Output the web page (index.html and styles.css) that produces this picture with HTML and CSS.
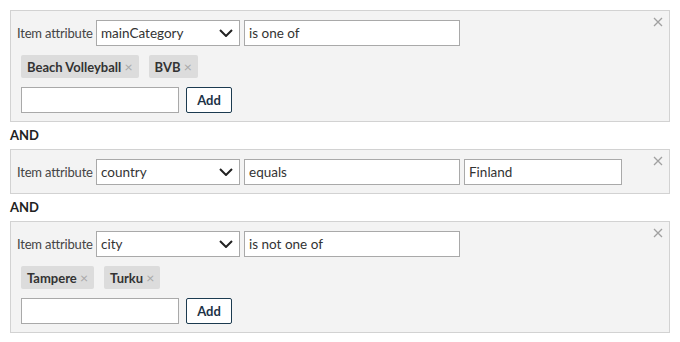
FILE: index.html
```html
<!DOCTYPE html>
<html lang="en">
<head>
    <meta charset="UTF-8">
    <title>Filter rules</title>
    <link rel="stylesheet" href="styles.css">
</head>
<body>
    <div class="rules">
        <!-- rule 1 -->
        <div class="rule">
            <svg class="remove" width="10" height="10" viewBox="0 0 10 10"><path d="M1 1L9 9M9 1L1 9"/></svg>
            <div class="row">
                <span class="label">Item attribute</span>
                <div class="select">mainCategory <svg class="chevron" width="14" height="8" viewBox="0 0 14 8"><path d="M1 1L7 7L13 1"/></svg></div>
                <div class="field op">is one of</div>
            </div>
            <div class="tags">
                <span class="tag">Beach Volleyball <span class="x">×</span></span>
                <span class="tag">BVB <span class="x">×</span></span>
            </div>
            <div class="add-row">
                <div class="field value"></div>
                <button class="add">Add</button>
            </div>
        </div>

        <div class="and">AND</div>

        <!-- rule 2 -->
        <div class="rule">
            <svg class="remove" width="10" height="10" viewBox="0 0 10 10"><path d="M1 1L9 9M9 1L1 9"/></svg>
            <div class="row">
                <span class="label">Item attribute</span>
                <div class="select">country <svg class="chevron" width="14" height="8" viewBox="0 0 14 8"><path d="M1 1L7 7L13 1"/></svg></div>
                <div class="field op">equals</div>
                <div class="field value">Finland</div>
            </div>
        </div>

        <div class="and">AND</div>

        <!-- rule 3 -->
        <div class="rule">
            <svg class="remove" width="10" height="10" viewBox="0 0 10 10"><path d="M1 1L9 9M9 1L1 9"/></svg>
            <div class="row">
                <span class="label">Item attribute</span>
                <div class="select">city <svg class="chevron" width="14" height="8" viewBox="0 0 14 8"><path d="M1 1L7 7L13 1"/></svg></div>
                <div class="field op">is not one of</div>
            </div>
            <div class="tags">
                <span class="tag">Tampere <span class="x">×</span></span>
                <span class="tag">Turku <span class="x">×</span></span>
            </div>
            <div class="add-row">
                <div class="field value"></div>
                <button class="add">Add</button>
            </div>
        </div>
    </div>
</body>
</html>
```

FILE: styles.css
```css
body {
    margin: 0;
    padding: 10px;
    font-family: Lato, "Liberation Sans", sans-serif;
    font-size: 13px;
    color: #333;
    background-color: #fff;
}

.rules {
    width: 660px;
}

.rule {
    position: relative;
    background-color: #f3f3f3;
    border: 1px solid #d2d2d2;
    padding: 9px 6px 8px 6px;
}

.remove {
    position: absolute;
    top: 6px;
    right: 6px;
    stroke: #a0a0a0;
    stroke-width: 1.3;
}

.row {
    display: flex;
    align-items: center;
}

.label {
    width: 79px;
    color: #444;
    letter-spacing: -0.2px;
}

.select, .field {
    box-sizing: border-box;
    height: 26px;
    border: 1px solid #a9a9a9;
    background-color: #fff;
    display: flex;
    align-items: center;
    padding: 0 4px;
    color: #333;
    font-size: 13.5px;
}

.select {
    width: 144px;
    justify-content: space-between;
    padding-right: 6px;
}

.chevron {
    fill: none;
    stroke: #222;
    stroke-width: 2;
}

.op {
    width: 216px;
    margin-left: 4px;
}

.row .value {
    width: 158px;
    margin-left: 4px;
}

.tags {
    display: flex;
    gap: 10px;
    margin: 9px 0 0 4px;
}

.tag {
    background-color: #dcdcdc;
    font-weight: bold;
    color: #333;
    height: 23px;
    line-height: 23px;
    padding: 0 6px;
    border-radius: 2px;
}

.tag .x {
    font-weight: normal;
    font-size: 14px;
    color: #a8a8a8;
}

.add-row {
    display: flex;
    gap: 7px;
    margin: 9px 0 0 4px;
}

.add-row .value {
    width: 158px;
}

.add {
    box-sizing: border-box;
    width: 46px;
    height: 26px;
    border: 1px solid #1c3b50;
    border-radius: 2px;
    background-color: #fff;
    color: #1c3246;
    font-family: inherit;
    font-size: 13px;
    font-weight: bold;
    padding: 0;
}

.and {
    font-weight: bold;
    color: #222;
    height: 27px;
    line-height: 26px;
}
```
